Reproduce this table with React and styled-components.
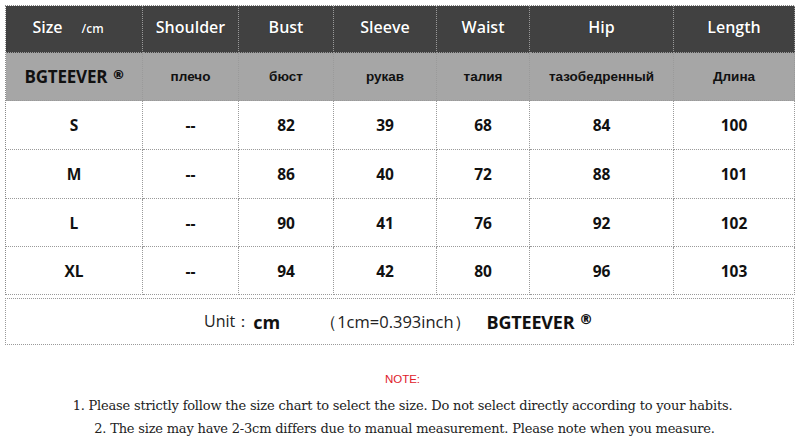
import React from "react";
import styled, { createGlobalStyle } from "styled-components";

const GlobalStyle = createGlobalStyle`
  html, body {
    margin: 0;
    padding: 0;
    background: #ffffff;
  }
  body {
    font-family: "Open Sans", "Liberation Sans", sans-serif;
  }
`;

const Page = styled.div`
  width: 800px;
  height: 441px;
  padding: 5px 0 0 5px;
  box-sizing: border-box;
  background: #fff;
`;

const Chart = styled.div`
  width: 789px;
  display: grid;
  grid-template-columns: 137px 96px 95px 103px 93px 144px 121px;
  border-top: 1px dotted #8a8a8a;
  border-left: 1px dotted #8a8a8a;
  box-sizing: border-box;
`;

const Cell = styled.div`
  height: ${(p) => p.$h || 48}px;
  display: flex;
  align-items: center;
  justify-content: center;
  box-sizing: border-box;
  padding-bottom: ${(p) => (p.$kind === "head" ? 4 : 0)}px;
  border-right: 1px dotted #9a9a9a;
  border-bottom: 1px dotted #9a9a9a;
  background: ${(p) =>
    p.$kind === "head" ? "#414141" : p.$kind === "sub" ? "#a6a6a6" : "#ffffff"};
  color: ${(p) => (p.$kind === "head" ? "#ffffff" : "#111111")};
`;

const HeadText = styled.span`
  font-family: "Open Sans", "Liberation Sans", sans-serif;
  font-weight: 600;
  font-size: 16px;
  text-shadow: 0 0 1px rgba(0, 0, 0, 0.6);
`;

const SizeHead = styled(HeadText)`
  margin-left: -12px;
`;

const Small = styled.span`
  font-size: 12px;
  margin-left: 19px;
`;

const SubText = styled.span`
  font-family: "Liberation Sans", Arial, sans-serif;
  font-weight: 700;
  font-size: 13.5px;
`;

const Brand = styled.span`
  font-family: "Open Sans", "Liberation Sans", sans-serif;
  font-weight: 700;
  font-size: ${(p) => p.$size || 17}px;
  letter-spacing: -0.2px;
`;

const Reg = styled.sup`
  font-size: 0.75em;
  font-weight: 800;
  margin-left: 6px;
  vertical-align: 0.3em;
`;

const Value = styled.span`
  font-family: "Open Sans", "Liberation Sans", sans-serif;
  font-weight: 700;
  font-size: 15.5px;
`;

const UnitRow = styled.div`
  width: 789px;
  height: 47px;
  margin-top: 3px;
  box-sizing: border-box;
  border: 1px dotted #9a9a9a;
  display: flex;
  align-items: center;
  padding-left: 198px;
  font-family: "Open Sans", "Liberation Sans", sans-serif;
  color: #111;
`;

const UnitLabel = styled.span`
  font-size: 16px;
  color: #222;
`;

const UnitValue = styled.span`
  font-size: 18px;
  font-weight: 700;
  margin-left: 2px;
`;

const Conversion = styled.span`
  font-size: 16.5px;
  color: #222;
  margin-left: 40px;
`;

const UnitBrand = styled.span`
  margin-left: 16px;
`;

const Notes = styled.div`
  margin-top: 28px;
  display: flex;
  flex-direction: column;
  align-items: center;
  font-family: "DejaVu Serif", "Liberation Serif", serif;
  color: #222;
`;

const NoteTitle = styled.div`
  font-family: "Liberation Sans", Arial, sans-serif;
  font-size: 11.5px;
  color: #e0202a;
  margin-bottom: 9px;
`;

const NoteLine = styled.div`
  font-size: 13px;
  line-height: 23px;
  letter-spacing: -0.2px;
  margin-left: ${(p) => p.$indent || 0}px;
`;

const columns = ["Shoulder", "Bust", "Sleeve", "Waist", "Hip", "Length"];
const russian = ["плечо", "бюст", "рукав", "талия", "тазобедренный", "Длина"];
const rows = [
  { size: "S", values: ["--", "82", "39", "68", "84", "100"], h: 49 },
  { size: "M", values: ["--", "86", "40", "72", "88", "101"], h: 49 },
  { size: "L", values: ["--", "90", "41", "76", "92", "102"], h: 48 },
  { size: "XL", values: ["--", "94", "42", "80", "96", "103"], h: 48 },
];

export default function App() {
  return (
    <Page>
      <GlobalStyle />
      <Chart>
        <Cell $kind="head" $h={47}>
          <SizeHead>
            Size<Small>/cm</Small>
          </SizeHead>
        </Cell>
        {columns.map((c) => (
          <Cell key={c} $kind="head" $h={47}>
            <HeadText>{c}</HeadText>
          </Cell>
        ))}
        <Cell $kind="sub">
          <Brand>
            BGTEEVER<Reg>®</Reg>
          </Brand>
        </Cell>
        {russian.map((r) => (
          <Cell key={r} $kind="sub">
            <SubText>{r}</SubText>
          </Cell>
        ))}
        {rows.map((row) => (
          <React.Fragment key={row.size}>
            <Cell $h={row.h}>
              <Value>{row.size}</Value>
            </Cell>
            {row.values.map((v, i) => (
              <Cell key={i} $h={row.h}>
                <Value>{v}</Value>
              </Cell>
            ))}
          </React.Fragment>
        ))}
      </Chart>
      <UnitRow>
        <UnitLabel>Unit：</UnitLabel>
        <UnitValue>cm</UnitValue>
        <Conversion>（1cm=0.393inch）</Conversion>
        <UnitBrand>
          <Brand $size={18}>
            BGTEEVER<Reg>®</Reg>
          </Brand>
        </UnitBrand>
      </UnitRow>
      <Notes>
        <NoteTitle>NOTE:</NoteTitle>
        <NoteLine>
          1. Please strictly follow the size chart to select the size. Do not select directly according to your habits.
        </NoteLine>
        <NoteLine $indent={4}>
          2. The size may have 2-3cm differs due to manual measurement. Please note when you measure.
        </NoteLine>
      </Notes>
    </Page>
  );
}
